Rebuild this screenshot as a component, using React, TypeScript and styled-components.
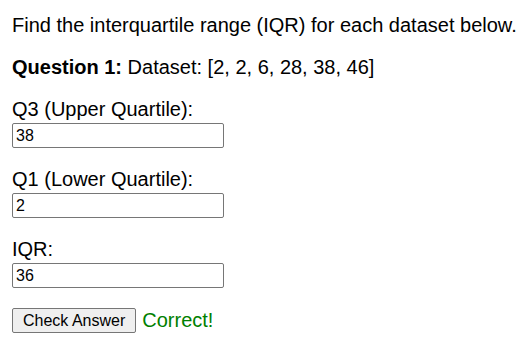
import React, { useState } from "react";
import styled, { createGlobalStyle } from "styled-components";

const GlobalStyle = createGlobalStyle`
  body {
    margin: 0;
    background: #ffffff;
    color: #000000;
    font-family: "Liberation Sans", Arial, sans-serif;
  }
`;

const Page = styled.div`
  padding: 14px 12px;
  font-size: 20px;
  line-height: 23px;
`;

const Intro = styled.p`
  margin: 0 0 19px;
`;

const Question = styled.p`
  margin: 0 0 19px;
`;

const Field = styled.div`
  margin-bottom: 20px;
`;

const Label = styled.label`
  display: block;
  margin-bottom: 2px;
`;

const Input = styled.input`
  display: block;
  box-sizing: border-box;
  width: 212px;
  height: 25px;
  margin: 0;
  padding: 1px 3px;
  border: 1px solid #767676;
  border-radius: 2px;
  font-family: "Liberation Sans", Arial, sans-serif;
  font-size: 16px;
  color: #000000;
  background: #ffffff;
`;

const ActionRow = styled.div`
  display: flex;
  align-items: center;
  gap: 6px;
`;

const CheckButton = styled.button`
  box-sizing: border-box;
  height: 25px;
  padding: 0 10px;
  margin: 0;
  border: 1px solid #767676;
  border-radius: 2px;
  background: #efefef;
  font-family: "Liberation Sans", Arial, sans-serif;
  font-size: 16px;
  color: #000000;
`;

const Feedback = styled.span<{ ok: boolean }>`
  color: ${({ ok }) => (ok ? "#008000" : "#cc0000")};
  font-size: 20px;
`;

const fields = [
  { id: "q3", label: "Q3 (Upper Quartile):" },
  { id: "q1", label: "Q1 (Lower Quartile):" },
  { id: "iqr", label: "IQR:" },
];

export default function App() {
  const [values, setValues] = useState<Record<string, string>>({
    q3: "38",
    q1: "2",
    iqr: "36",
  });
  const [ok, setOk] = useState(true);

  const check = () => {
    setOk(values.q3 === "38" && values.q1 === "2" && values.iqr === "36");
  };

  return (
    <>
      <GlobalStyle />
      <Page>
        <Intro>Find the interquartile range (IQR) for each dataset below.</Intro>
        <Question>
          <b>Question 1:</b> Dataset: [2, 2, 6, 28, 38, 46]
        </Question>
        {fields.map((f) => (
          <Field key={f.id}>
            <Label htmlFor={f.id}>{f.label}</Label>
            <Input
              id={f.id}
              value={values[f.id]}
              onChange={(e) => setValues({ ...values, [f.id]: e.target.value })}
            />
          </Field>
        ))}
        <ActionRow>
          <CheckButton onClick={check}>Check Answer</CheckButton>
          <Feedback ok={ok}>{ok ? "Correct!" : "Incorrect"}</Feedback>
        </ActionRow>
      </Page>
    </>
  );
}
